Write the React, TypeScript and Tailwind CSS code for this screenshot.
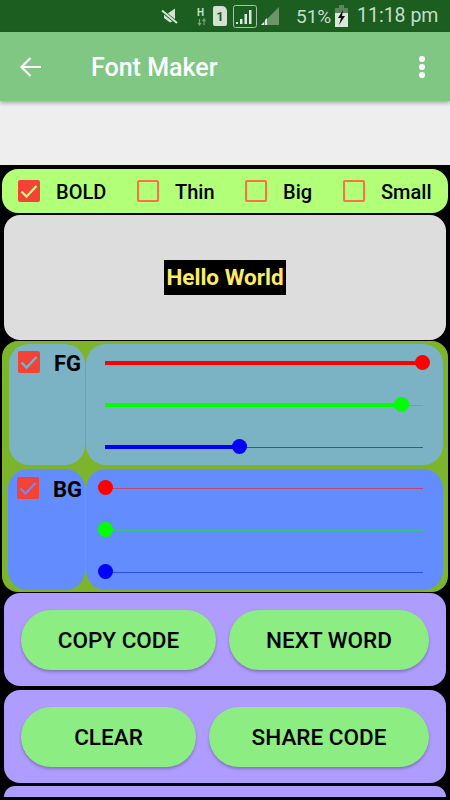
const Check = ({ checked, tick }: { checked: boolean; tick?: string }) =>
  checked ? (
    <svg width="22" height="22" viewBox="0 0 22 22" className="shrink-0">
      <rect width="22" height="22" rx="2" fill="#f44336" />
      <path d="M3.5 11.5l5 5 10-10.5" fill="none" stroke={tick} strokeWidth="2.4" />
    </svg>
  ) : (
    <div className="w-[22px] h-[22px] shrink-0 rounded-[2px] border-2 border-[#ff7043]" />
  );

const StatusIcons = () => (
  <div className="flex items-center h-full text-[#c8dcc8]">
    <svg width="17" height="18" viewBox="0 0 17 18" className="ml-[161px]">
      <path d="M3 7h3l8-5.500V13L9 15.500 3 11z" fill="#d5e3d5" />
      <path d="M0 3l16 13" stroke="#1b5e20" strokeWidth="3.5" />
      <path d="M1 3.500l15 12.500" stroke="#d5e3d5" strokeWidth="2" />
    </svg>
    <svg width="10" height="20" viewBox="0 0 10 20" className="ml-[19px]">
      <text x="0" y="10" fontFamily="Roboto, sans-serif" fontWeight="700" fontSize="10" fill="#cfdccf">H</text>
      <path d="M2.5 13v6M1 17l1.5 2 1.5-2M7 19v-6M5.500 15l1.500-2 1.500 2" stroke="#7fa27f" strokeWidth="1.200" fill="none" />
    </svg>
    <div className="ml-[6px] w-[14px] h-[20px] bg-[#d3e0d3] rounded-[2px] rounded-tr-[5px] flex items-center justify-center text-[#1b5e20] text-[13px] font-bold leading-none">
      1
    </div>
    <svg width="24" height="23" viewBox="0 0 24 23" className="ml-[6px]">
      <rect x="0.500" y="0.500" width="23" height="22" rx="2" fill="none" stroke="#a9c2a9" />
      <path d="M3 19h2v-2H3zM7 19h2.500v-5H7zM11.500 19H14v-10h-2.500zM16 19h2.500V5H16z" fill="#dfe9df" />
    </svg>
    <svg width="18" height="20" viewBox="0 0 18 20" className="ml-[4px]">
      <path d="M0 19L18 1v18z" fill="#6b956b" />
      <path d="M0 19l3-3v3zM4 19v-5l2-2v7z" fill="#dfe9df" />
    </svg>
    <span className="ml-[17px] text-[19px] leading-none w-[34px]">51%</span>
    <svg width="13" height="22" viewBox="0 0 13 22" className="ml-[5px]">
      <path d="M4 0h5v3h4v19H0V3h4z" fill="#dbe6db" />
      <path d="M0 3h13v5H0zM4 0h5v3H4z" fill="#5d845d" />
      <path d="M8 5L3 13h3l-2 7 6-9H7z" fill="#111" />
    </svg>
    <span className="ml-[9px] text-[19.500px] leading-none">11:18 pm</span>
  </div>
);

const Slider = ({ value, color, track }: { value: number; color: string; track: string }) => (
  <div className="relative h-[16px] w-[318px]">
    <div className="absolute left-0 right-0 top-[8px] h-px" style={{ backgroundColor: track }} />
    <div className="absolute left-0 top-[6px] h-[4px]" style={{ width: value, backgroundColor: color }} />
    <div
      className="absolute top-0 w-[15px] h-[15px] rounded-full"
      style={{ left: value - 7, backgroundColor: color }}
    />
  </div>
);

const ColorRow = ({ label, bg, values, left }: { label: string; bg: string; values: number[]; left: string }) => {
  const colors = ["#ff0000", "#00ff00", "#0000ff"];
  const tracks = ["#c0486f", "#35c77d", "#2a50e8"];
  return (
    <div className="flex h-[121px] gap-px">
      <div className={`${left} rounded-[20px] pl-[9px] flex items-start`} style={{ backgroundColor: bg }}>
        <Check checked tick={bg} />
        <span className="ml-[14px] text-[22px] leading-[26px] font-bold text-black">{label}</span>
      </div>
      <div className="w-[357px] rounded-[20px] pl-[19px] pt-[11px] flex flex-col gap-[26px]" style={{ backgroundColor: bg }}>
        {values.map((v, i) => (
          <Slider key={i} value={v} color={colors[i]} track={tracks[i]} />
        ))}
      </div>
    </div>
  );
};

const Btn = ({ label, w }: { label: string; w: string }) => (
  <button className={`${w} h-[60px] rounded-full bg-[#8bed82] text-black text-[22.5px] font-medium pt-[2px] shadow-[0_2px_3px_rgba(0,0,0,0.25)]`}>
    {label}
  </button>
);

export default function App() {
  return (
    <div className="w-[450px] h-[800px] bg-black overflow-hidden flex flex-col font-['Roboto',sans-serif]">
      <div className="h-[32px] bg-[#1b5e20] shrink-0">
        <StatusIcons />
      </div>
      <div className="h-[69px] bg-[#81c784] flex items-center shrink-0 text-white shadow-[0_2px_4px_rgba(0,0,0,0.3)] z-10">
        <svg width="22" height="20" viewBox="0 0 22 20" className="ml-[20px]">
          <path d="M21 10H2M10.500 1L1.500 10l9 9" fill="none" stroke="white" strokeWidth="2.200" />
        </svg>
        <span className="ml-[49px] pt-[2px] text-[25px] font-medium">Font Maker</span>
        <div className="ml-auto mr-[25px] flex flex-col gap-[2px]">
          <div className="w-[6px] h-[6px] rounded-full bg-white" />
          <div className="w-[6px] h-[6px] rounded-full bg-white" />
          <div className="w-[6px] h-[6px] rounded-full bg-white" />
        </div>
      </div>
      <div className="h-[64px] bg-[#eeeeee] shrink-0" />

      <div className="mt-[4px] mx-[2px] h-[44px] rounded-[16px] bg-[#b2ff78] flex items-center pl-[16px] text-[20px] font-medium text-black shrink-0">
        <Check checked tick="#b2ff78" />
        <span className="ml-[16px] pt-[2px] w-[81px]">BOLD</span>
        <Check checked={false} />
        <span className="ml-[16px] pt-[2px] w-[70px]">Thin</span>
        <Check checked={false} />
        <span className="ml-[16px] pt-[2px] w-[60px]">Big</span>
        <Check checked={false} />
        <span className="ml-[16px] pt-[2px]">Small</span>
      </div>

      <div className="mt-[2px] mx-[4px] h-[125px] rounded-[16px] bg-[#dddddd] flex items-center justify-center shrink-0">
        <span className="bg-black text-[#ffeb66] text-[22.500px] font-bold h-[35px] w-[122px] flex items-center justify-center">
          Hello World
        </span>
      </div>

      <div className="mt-px mx-[2px] h-[251px] rounded-[16px] bg-[#7cb42c] pl-[7px] pt-[3px] flex flex-col gap-[4px] shrink-0">
        <ColorRow label="FG" bg="#7bb2c4" values={[317, 296, 134]} left="w-[76px] pt-[7px]" />
        <ColorRow label="BG" bg="#638dff" values={[0, 0, 0]} left="w-[77px] -ml-px pt-[8px]" />
      </div>

      <div className="mt-px mx-[4px] h-[93px] rounded-[16px] bg-[#ae9cff] flex items-center gap-[13px] pl-[17px] shrink-0">
        <Btn label="COPY CODE" w="w-[195px]" />
        <Btn label="NEXT WORD" w="w-[200px]" />
      </div>
      <div className="mt-[4px] mx-[4px] h-[93px] rounded-[16px] bg-[#ae9cff] flex items-center gap-[13px] pl-[17px] shrink-0">
        <Btn label="CLEAR" w="w-[175px]" />
        <Btn label="SHARE CODE" w="w-[220px]" />
      </div>
      <div className="mt-[3px] mx-[4px] h-[11px] rounded-t-[16px] bg-[#ae9cff] shrink-0" />
    </div>
  );
}
